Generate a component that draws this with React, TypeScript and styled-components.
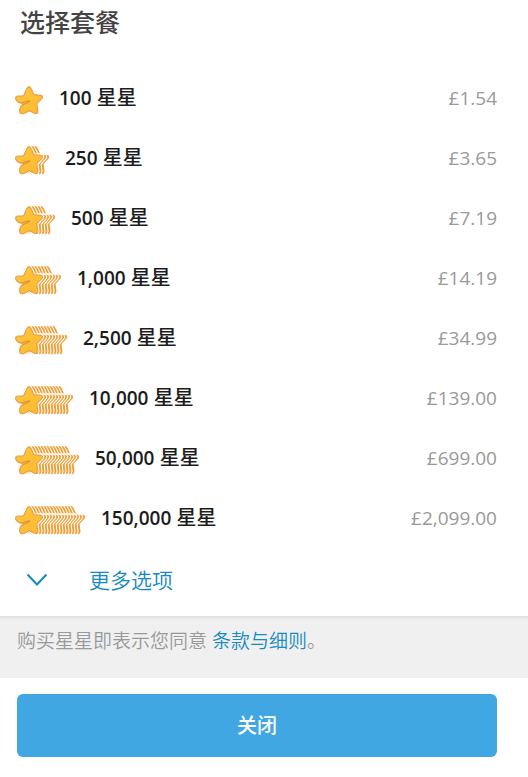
import React from 'react';
import styled, { createGlobalStyle } from 'styled-components';

const GlobalStyle = createGlobalStyle`
  * { box-sizing: border-box; }
  body {
    margin: 0;
    background: #fff;
    color: #222;
    font-family: 'Open Sans', 'Noto Sans CJK SC', sans-serif;
  }
`;

const Page = styled.main`
  display: flex;
  flex-direction: column;
`;

const Title = styled.h1`
  margin: 0;
  padding: 4px 20px 28px;
  font-size: 25px;
  line-height: 36px;
  font-weight: 500;
  color: #444;
`;

const Options = styled.ul`
  margin: 0;
  padding: 0;
  list-style: none;
`;

const Option = styled.button`
  display: flex;
  align-items: center;
  width: 100%;
  height: 60px;
  padding: 0 31px 0 14px;
  border: 0;
  background: none;
  font: inherit;
  text-align: left;
  cursor: pointer;
`;

const Amount = styled.span`
  flex: 1;
  margin-left: 15px;
  font-size: 20px;
  line-height: 28px;
  font-weight: 500;
  color: #1c1c1c;
`;

const Count = styled.span`
  font-size: 19px;
  font-weight: 600;
`;

const Price = styled.span`
  font-size: 19px;
  line-height: 28px;
  font-weight: 400;
  color: #999;
`;

const MoreButton = styled.button`
  display: flex;
  align-items: center;
  gap: 41px;
  width: 100%;
  height: 68px;
  padding: 0 26px 6px;
  border: 0;
  background: none;
  font: inherit;
  font-size: 21px;
  font-weight: 350;
  color: #168abf;
  cursor: pointer;
`;

const Terms = styled.p`
  margin: 0;
  padding: 11px 17px 23px;
  background: linear-gradient(#dedede, #f0f0f0 4px);
  font-size: 19px;
  line-height: 28px;
  font-weight: 350;
  color: #999;
`;

const TermsLink = styled.a`
  color: #168ac4;
  text-decoration: none;
`;

const Footer = styled.footer`
  display: flex;
  padding: 16px 31px 20px 17px;
`;

const CloseButton = styled.button`
  flex: 1;
  height: 63px;
  padding: 0 0 2px;
  border: 0;
  border-radius: 6px;
  background: #40a7e3;
  color: #fff;
  font: inherit;
  font-size: 20px;
  font-weight: 500;
  cursor: pointer;
`;

const STEP = 3;
const OUTLINE =
  'M15 1.6C16.2 1.6 16.7 2.6 17.2 3.8L19.8 9.6L26.6 10.4C28.8 10.7 29.2 12.2 27.8 13.6L22.8 18.6L23.8 25.6C24.2 28.4 22.6 29.2 20.6 28.2L15.4 25.6L10.4 28.2C7.8 29.4 5.4 28.4 5.6 25.6C5.8 22.8 6.6 21 9 19.6L11.4 18.2L10.2 17.2C9 17.8 8.2 18.2 7 18C4.6 17.6 2.6 16.2 1.8 14.2C1.2 12.4 2 11.2 3.8 11C6 10.8 7.6 11.8 9.8 10.4L12.8 3.8C13.3 2.6 13.8 1.6 15 1.6Z';
const CREASE = 'M7 18C9.8 18 11.8 15.8 15.6 15.8C15.4 18 11.6 18.2 9 19.6';
const BACK_STAR =
  'M15 1C16.4 1 17.2 2.2 17.8 3.6L20.4 9.2L26.8 9.8C29.4 10.2 30 12 28.2 14L23.6 19L24.4 25.6C24.8 29 22.8 29.8 20.4 28.8L15.4 26.2L10.2 28.8L9 12L12.2 3.6C12.8 2 13.6 1 15 1Z';

function StarStack({ extra }: { extra: number }) {
  const width = 30 + extra * STEP;
  const copies = Array.from({ length: extra }, (_, i) => extra - i);
  return (
    <svg width={width} height="34" viewBox={`0 -4 ${width} 34`} aria-hidden="true">
      <defs>
        <linearGradient id={`gold-${extra}`} x1="0" y1="0" x2="1" y2="1">
          <stop offset="0" stopColor="#ffc93c" />
          <stop offset="1" stopColor="#fdb72e" />
        </linearGradient>
      </defs>
      {copies.map((n) => (
        <g key={n} transform={`translate(${n * STEP} 0)`}>
          <path d={BACK_STAR} fill="#fff" stroke="#fff" strokeWidth="2" />
          <path d={BACK_STAR} fill="#eda23c" />
        </g>
      ))}
      {extra > 0 && <path d={BACK_STAR} fill="#fff" stroke="#fff" strokeWidth="2" />}
      <path
        d={OUTLINE}
        fill={`url(#gold-${extra})`}
        stroke="#e5a050"
        strokeWidth="1.2"
        strokeLinejoin="round"
      />
      <path
        d={CREASE}
        fill="#ffbe34"
        stroke="#e3923a"
        strokeWidth="1.2"
        strokeLinecap="round"
        strokeLinejoin="round"
      />
    </svg>
  );
}

const packages = [
  { amount: '100', price: '£1.54', extra: 0 },
  { amount: '250', price: '£3.65', extra: 2 },
  { amount: '500', price: '£7.19', extra: 4 },
  { amount: '1,000', price: '£14.19', extra: 6 },
  { amount: '2,500', price: '£34.99', extra: 8 },
  { amount: '10,000', price: '£139.00', extra: 10 },
  { amount: '50,000', price: '£699.00', extra: 12 },
  { amount: '150,000', price: '£2,099.00', extra: 14 },
];

export default function App() {
  return (
    <Page lang="zh-CN">
      <GlobalStyle />
      <Title>选择套餐</Title>
      <Options>
        {packages.map((p) => (
          <li key={p.amount}>
            <Option type="button">
              <StarStack extra={p.extra} />
              <Amount>
                <Count>{p.amount}</Count> 星星
              </Amount>
              <Price>{p.price}</Price>
            </Option>
          </li>
        ))}
      </Options>
      <MoreButton type="button">
        <svg width="22" height="14" viewBox="0 0 22 14" fill="none" aria-hidden="true">
          <path d="M1.5 2.5L11 12.5L20.5 2.5" stroke="#168abf" strokeWidth="2" />
        </svg>
        更多选项
      </MoreButton>
      <Terms>
        购买星星即表示您同意 <TermsLink href="#terms">条款与细则</TermsLink>。
      </Terms>
      <Footer>
        <CloseButton type="button">关闭</CloseButton>
      </Footer>
    </Page>
  );
}
